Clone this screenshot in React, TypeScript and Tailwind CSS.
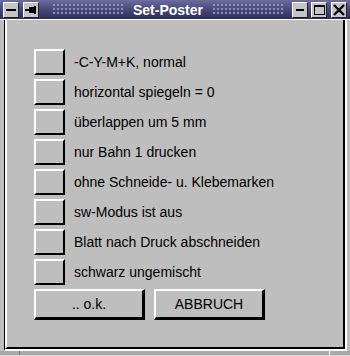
const options = [
  "-C-Y-M+K, normal",
  "horizontal spiegeln = 0",
  "überlappen um 5 mm",
  "nur Bahn 1 drucken",
  "ohne Schneide- u. Klebemarken",
  "sw-Modus ist aus",
  "Blatt nach Druck abschneiden",
  "schwarz ungemischt",
];

function TitleButton({ children }: { children: React.ReactNode }) {
  return (
    <div className="w-[16px] h-[16px] bg-[#c4c4c4] border-t border-l border-white border-r border-b border-r-[#202030] border-b-[#202030] flex items-center justify-center">
      {children}
    </div>
  );
}

function Dots({ className }: { className: string }) {
  return (
    <div
      className={`h-[13px] bg-[radial-gradient(circle,#8c8cb8_0.8px,transparent_1px)] bg-[length:4px_4px] ${className}`}
    />
  );
}

function Bevel({ className, children }: { className: string; children?: React.ReactNode }) {
  return (
    <div
      className={`bg-[#bebebe] border-t-2 border-l-2 border-white border-r-2 border-b-2 border-r-black border-b-black flex items-center justify-center ${className}`}
    >
      {children}
    </div>
  );
}

export default function App() {
  return (
    <div className="w-[350px] h-[356px] bg-[#bebebe] flex flex-col font-['Liberation_Sans',Arial,sans-serif] overflow-hidden">
      {/* title bar */}
      <div className="h-[19px] flex items-center px-[3px] bg-gradient-to-b from-[#6c6c9e] via-[#48487a] to-[#2e2e58]">
        <TitleButton>
          <div className="w-[10px] h-[2px] bg-black" />
        </TitleButton>
        <div className="w-[4px]" />
        <TitleButton>
          <svg width="12" height="10" viewBox="0 0 12 10">
            <rect x="0" y="4" width="4" height="2" fill="#000" />
            <rect x="4" y="2" width="5" height="6" fill="#000" />
            <rect x="9" y="1" width="2" height="8" fill="#000" />
          </svg>
        </TitleButton>
        <Dots className="ml-[13px] w-[72px]" />
        <div className="flex-1 text-center text-white font-bold text-[14px] leading-none">Set-Poster</div>
        <Dots className="mr-[8px] w-[72px]" />
        <TitleButton>
          <div className="w-[8px] h-[2px] bg-black mt-[1px]" />
        </TitleButton>
        <div className="w-[3px]" />
        <TitleButton>
          <div className="w-[11px] h-[10px] border border-black border-t-2" />
        </TitleButton>
        <div className="w-[4px]" />
        <TitleButton>
          <svg width="12" height="12" viewBox="0 0 12 12">
            <path d="M1 1 L11 11 M11 1 L1 11" stroke="#000" strokeWidth="2.4" />
          </svg>
        </TitleButton>
      </div>

      {/* frame */}
      <div className="flex-1 flex flex-col border-t border-white pl-[4px] pr-[3px]">
        <div className="flex-1 border-l border-black border-r-2 border-r-white border-b-2 border-b-white">
          <div className="h-full border-l-2 border-l-white border-r-2 border-r-black border-b-2 border-b-black pt-[29px] pl-[27px] flex flex-col gap-[4px]">
            {options.map((label) => (
              <div key={label} className="flex items-center h-[26px]">
                <Bevel className="w-[31px] h-[26px]" />
                <span className="ml-[9px] text-[14px] text-black leading-none">{label}</span>
              </div>
            ))}
            <div className="flex gap-[9px]">
              <Bevel className="w-[111px] h-[31px] border-r-[3px] border-b-[3px]">
                <span className="text-[14px] text-black">.. o.k.</span>
              </Bevel>
              <Bevel className="w-[111px] h-[31px] border-r-[3px] border-b-[3px]">
                <span className="text-[14px] text-black">ABBRUCH</span>
              </Bevel>
            </div>
          </div>
        </div>
        <div className="h-[5px] flex bg-[#a9a9a9] border-b border-[#d8d8d8] -mx-[4px]">
          <div className="w-[20px] border-r border-[#707070]" />
          <div className="flex-1" />
          <div className="w-[22px] border-l border-white" />
        </div>
      </div>
    </div>
  );
}
